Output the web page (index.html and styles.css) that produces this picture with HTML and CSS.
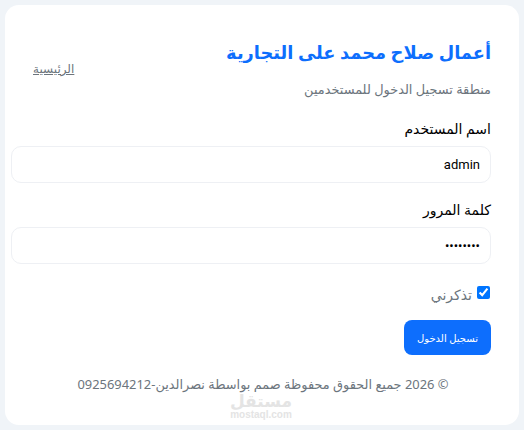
FILE: index.html
```html
<!DOCTYPE html>
<html lang="ar" dir="rtl">
<head>
    <meta charset="UTF-8">
    <meta name="viewport" content="width=device-width, initial-scale=1.0">
    <title>تسجيل الدخول</title>
    <link rel="stylesheet" href="styles.css">
</head>
<body>
    <div class="card">
        <div class="top-row">
            <h1>أعمال صلاح محمد على التجارية</h1>
            <a class="home-link" href="#">الرئيسية</a>
        </div>
        <p class="subtitle">منطقة تسجيل الدخول للمستخدمين</p>

        <form class="login-form">
            <div class="form-group">
                <label for="username">اسم المستخدم</label>
                <input type="text" id="username" value="admin">
            </div>
            <div class="form-group">
                <label for="password">كلمة المرور</label>
                <input type="password" id="password" value="password">
            </div>
            <div class="remember">
                <input type="checkbox" id="remember" checked>
                <label for="remember">تذكرني</label>
            </div>
            <button type="submit">تسجيل الدخول</button>
        </form>

        <p class="copyright">© 2026 جميع الحقوق محفوظة صمم بواسطة نصرالدين-0925694212</p>

        <div class="watermark">
            <span class="watermark-logo">مستقل</span>
            <span class="watermark-url">mostaql.com</span>
        </div>
    </div>
</body>
</html>
```

FILE: styles.css
```css
* {
    box-sizing: border-box;
}

body {
    margin: 0;
    padding: 5px;
    height: 430px;
    overflow: hidden;
    background-color: #f0f4f8;
    color: #000;
    font-family: "Noto Sans", "DejaVu Sans", sans-serif;
}

.card {
    position: relative;
    height: 420px;
    padding: 33px 28px 0 6px;
    background: white;
    border-radius: 14px;
}

.top-row {
    display: flex;
    justify-content: space-between;
    align-items: flex-start;
    padding-left: 22px;
}

h1 {
    margin: 0;
    font-size: 17.8px;
    line-height: 28px;
    font-weight: 600;
    color: #0d6efd;
}

.home-link {
    margin-top: 21px;
    font-size: 12px;
    line-height: 20px;
    color: #6c757d;
}

.subtitle {
    margin: 0;
    font-size: 12.9px;
    line-height: 20px;
    color: #6c757d;
}

.form-group {
    margin-top: 20px;
}

.form-group label {
    display: block;
    margin-bottom: 7px;
    font-size: 14px;
    line-height: 20px;
}

.form-group input {
    display: block;
    width: 100%;
    height: 37px;
    padding: 0 10px;
    border: 1px solid #eef0f4;
    border-radius: 10px;
    font-family: Roboto, sans-serif;
    font-size: 13px;
    color: #000;
    background: white;
}

.form-group + .form-group {
    margin-top: 17px;
}

.remember {
    display: flex;
    align-items: center;
    gap: 5px;
    margin-top: 17px;
    padding-right: 1px;
    font-size: 14px;
    color: #6c757d;
}

.remember input {
    width: 13px;
    height: 13px;
    margin: 0;
}

.remember label {
    margin-top: 4px;
}

button {
    display: block;
    width: 87px;
    height: 35px;
    margin-top: 16px;
    padding: 0;
    border: none;
    border-radius: 8px;
    background-color: #0d6efd;
    color: white;
    font-family: inherit;
    font-size: 10px;
}

.copyright {
    margin: 21px -24px 0 0;
    font-size: 12.9px;
    line-height: 16px;
    text-align: center;
    color: #6c757d;
}

.watermark {
    position: absolute;
    left: 224px;
    top: 388px;
    width: 64px;
    display: flex;
    flex-direction: column;
    align-items: center;
    gap: 2px;
    color: #e4e4e4;
    pointer-events: none;
}

.watermark-logo {
    font-size: 17px;
    line-height: 15px;
    font-weight: 700;
}

.watermark-url {
    font-family: "Liberation Sans", sans-serif;
    font-size: 10px;
    font-weight: 700;
    line-height: 10px;
}
```
